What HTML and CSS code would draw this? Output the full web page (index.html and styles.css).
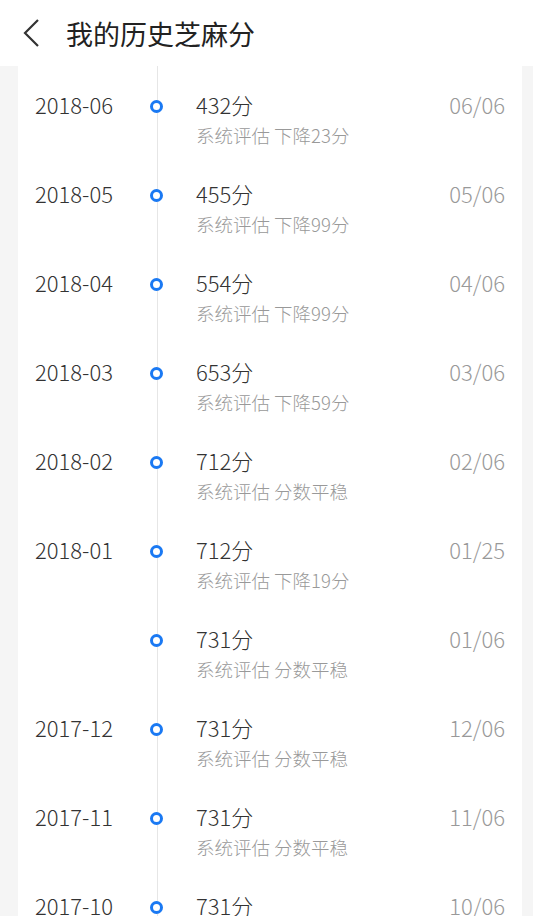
FILE: index.html
```html
<!DOCTYPE html>
<html lang="zh-CN">
<head>
    <meta charset="UTF-8">
    <meta name="viewport" content="width=device-width, initial-scale=1.0">
    <title>我的历史芝麻分</title>
    <link rel="stylesheet" href="styles.css">
</head>
<body>
    <header class="top-bar">
        <svg class="back-icon" width="20" height="30" viewBox="0 0 20 30" aria-hidden="true">
            <polyline points="16,2 3,15 16,28" fill="none" stroke="#333" stroke-width="2.2" stroke-linejoin="miter"/>
        </svg>
        <h1 class="page-title">我的历史芝麻分</h1>
    </header>

    <div class="history-card">
        <div class="record">
            <div class="month">2018-06</div>
            <div class="dot-col"><span class="dot"></span></div>
            <div class="info">
                <div class="score">432分</div>
                <div class="reason">系统评估 下降23分</div>
            </div>
            <div class="day">06/06</div>
        </div>
        <div class="record">
            <div class="month">2018-05</div>
            <div class="dot-col"><span class="dot"></span></div>
            <div class="info">
                <div class="score">455分</div>
                <div class="reason">系统评估 下降99分</div>
            </div>
            <div class="day">05/06</div>
        </div>
        <div class="record">
            <div class="month">2018-04</div>
            <div class="dot-col"><span class="dot"></span></div>
            <div class="info">
                <div class="score">554分</div>
                <div class="reason">系统评估 下降99分</div>
            </div>
            <div class="day">04/06</div>
        </div>
        <div class="record">
            <div class="month">2018-03</div>
            <div class="dot-col"><span class="dot"></span></div>
            <div class="info">
                <div class="score">653分</div>
                <div class="reason">系统评估 下降59分</div>
            </div>
            <div class="day">03/06</div>
        </div>
        <div class="record">
            <div class="month">2018-02</div>
            <div class="dot-col"><span class="dot"></span></div>
            <div class="info">
                <div class="score">712分</div>
                <div class="reason">系统评估 分数平稳</div>
            </div>
            <div class="day">02/06</div>
        </div>
        <div class="record">
            <div class="month">2018-01</div>
            <div class="dot-col"><span class="dot"></span></div>
            <div class="info">
                <div class="score">712分</div>
                <div class="reason">系统评估 下降19分</div>
            </div>
            <div class="day">01/25</div>
        </div>
        <div class="record">
            <div class="month"></div>
            <div class="dot-col"><span class="dot"></span></div>
            <div class="info">
                <div class="score">731分</div>
                <div class="reason">系统评估 分数平稳</div>
            </div>
            <div class="day">01/06</div>
        </div>
        <div class="record">
            <div class="month">2017-12</div>
            <div class="dot-col"><span class="dot"></span></div>
            <div class="info">
                <div class="score">731分</div>
                <div class="reason">系统评估 分数平稳</div>
            </div>
            <div class="day">12/06</div>
        </div>
        <div class="record">
            <div class="month">2017-11</div>
            <div class="dot-col"><span class="dot"></span></div>
            <div class="info">
                <div class="score">731分</div>
                <div class="reason">系统评估 分数平稳</div>
            </div>
            <div class="day">11/06</div>
        </div>
        <div class="record">
            <div class="month">2017-10</div>
            <div class="dot-col"><span class="dot"></span></div>
            <div class="info">
                <div class="score">731分</div>
                <div class="reason">系统评估 分数平稳</div>
            </div>
            <div class="day">10/06</div>
        </div>
    </div>
</body>
</html>
```

FILE: styles.css
```css
body {
    font-family: "Noto Sans CJK SC", "Noto Sans", sans-serif;
    font-weight: 300;
    margin: 0;
    padding: 0;
    color: #333;
    background-color: #f5f5f5;
}

.top-bar {
    display: flex;
    align-items: center;
    height: 66px;
    padding-left: 22px;
    background-color: #fff;
}

.back-icon {
    display: block;
    margin-right: 24px;
}

.page-title {
    margin: 0;
    font-size: 27px;
    font-weight: 400;
    color: #222;
}

/* the grey timeline runs down the whole card */
.history-card {
    margin: 0 11px 0 18px;
    padding-top: 23px;
    background: #fff linear-gradient(#e6e6e6, #e6e6e6) no-repeat 139px 0 / 1px 100%;
}

.record {
    display: flex;
    align-items: flex-start;
    height: 89px;
    padding: 0 17px;
}

.month {
    width: 116px;
    font-size: 22px;
    line-height: 30px;
    color: #333;
}

.dot-col {
    width: 13px;
    height: 34px;
    margin-left: -1px;
    display: flex;
    align-items: center;
}

.dot {
    display: block;
    width: 13px;
    height: 13px;
    box-sizing: border-box;
    border: 3px solid #1a79f3;
    border-radius: 50%;
    background-color: #fff;
}

.info {
    flex: 1;
    margin-left: 33px;
}

.score {
    font-size: 22px;
    line-height: 30px;
    color: #333;
}

.reason {
    margin-top: 2px;
    font-size: 18.5px;
    line-height: 28px;
    color: #999;
}

.day {
    font-size: 22px;
    line-height: 30px;
    color: #999;
}
```
